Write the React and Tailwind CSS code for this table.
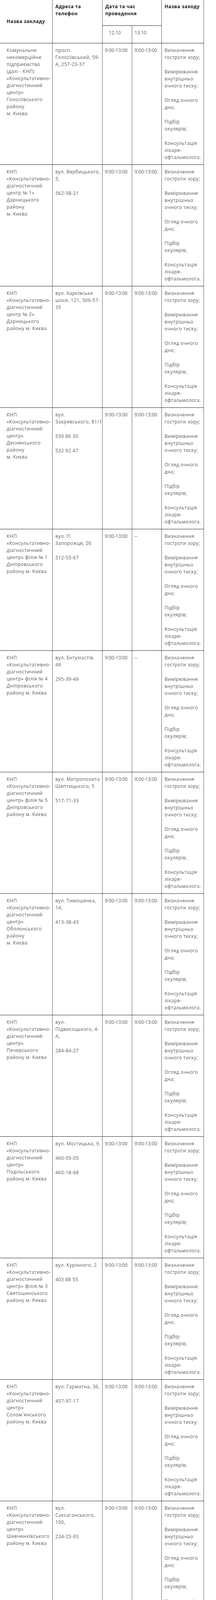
import React from "react";

const STD = [
  ["Визначення", "гостроти зору;"],
  ["Вимірювання", "внутрішньо", "очного тиску;"],
  ["Огляд очного", "дна;"],
  ["Підбір", "окулярів;"],
  ["Консультація", "лікаря-", "офтальмолога."],
];

const HOSP = [
  ["Визначення", "гостроти зору;"],
  ["Вимірювання", "внутрішньо", "очного тиску;"],
  ["Периметрія;"],
  ["Біомікроскопі", "я;"],
  ["Консультація", "лікаря-", "офтальмолога."],
];

const T = ["9:00-13:00"];
const KDC = ["КНП", "«Консультативно-", "діагностичний"];

const rows = [
  {
    name: [["Комунальне", "некомерційне", "підприємство", "(далі - КНП)", "«Консультативно-", "діагностичний", "центр»", "Голосіївського", "району", "м. Києва"]],
    addr: [["просп.", "Голосіївський, 59-", "А, 257-23-37"]],
    d1: T, d2: T, events: STD,
  },
  {
    name: [[...KDC, "центр № 1»", "Дарницького", "району", "м. Києва"]],
    addr: [["вул. Вербицького,", "5,"], ["562-58-21"]],
    d1: T, d2: T, events: STD,
  },
  {
    name: [[...KDC, "центр № 2»", "Дарницького", "району м. Києва"]],
    addr: [["вул. Харківське", "шосе, 121, 506-57-", "35"]],
    d1: T, d2: T, events: STD,
  },
  {
    name: [[...KDC, "центр»", "Деснянського", "району", "м. Києва"]],
    addr: [["вул.", "Закревського, 81/1"], ["530 86 30"], ["532 92 47"]],
    d1: T, d2: T, events: STD,
  },
  {
    name: [[...KDC, "центр» філія № 1", "Дніпровського", "району м. Києва"]],
    addr: [["вул. П.", "Запорожця, 26"], ["512-55-67"]],
    d1: T, d2: ["--"], events: STD,
  },
  {
    name: [[...KDC, "центр» філія № 4", "Дніпровського", "району м. Києва"]],
    addr: [["вул. Ентузіастів,", "49"], ["295-39-49"]],
    d1: T, d2: ["--"], events: STD,
  },
  {
    name: [[...KDC, "центр» філія № 5", "Дніпровського", "району м. Києва"]],
    addr: [["вул. Митрополита", "Шептицького, 5"], ["517-71-33"]],
    d1: T, d2: T, events: STD,
  },
  {
    name: [[...KDC, "центр»", "Оболонського", "району", "м. Києва"]],
    addr: [["вул. Тимошенка,", "14,"], ["413-38-43"]],
    d1: T, d2: T, events: STD,
  },
  {
    name: [[...KDC, "центр»", "Печерського", "району м. Києва"]],
    addr: [["вул.", "Підвисоцького, 4-", "А,"], ["284-84-27"]],
    d1: T, d2: T, events: STD,
  },
  {
    name: [[...KDC, "центр»", "Подільського", "району м. Києва"]],
    addr: [["вул. Мостицька, 9,"], ["460-05-05"], ["460-18-68"]],
    d1: T, d2: T, events: STD,
  },
  {
    name: [[...KDC, "центр» філія № 3", "Святошинського", "району м. Києва"]],
    addr: [["вул. Курінного, 2"], ["403 88 55"]],
    d1: T, d2: T, events: STD,
  },
  {
    name: [[...KDC, "центр»", "Солом`янського", "району м. Києва"]],
    addr: [["вул. Гарматна, 36,"], ["457-97-17"]],
    d1: T, d2: T, events: STD,
  },
  {
    name: [[...KDC, "центр»", "Шевченківського", "району м. Києва"]],
    addr: [["вул.", "Саксаганського,", "100,"], ["234-25-95"]],
    d1: T, d2: T, events: STD,
  },
  {
    name: [["Київська міська", "клінічна лікарня", "№ 1"], ["Офтальмологічне", "відділення"]],
    addr: [["вул. Харківське", "шосе, 121"], ["564-65-34"]],
    d1: T, d2: T, events: HOSP,
  },
  {
    name: [["Київська міська", "клінічна лікарня", "№ 3"], ["Офтальмологічне", "відділення"]],
    addr: [["вул. П.", "Запорожця, 26"], ["540-92-25"]],
    d1: T, d2: T, events: HOSP,
  },
  {
    name: [["Київська міська", "клінічна лікарня", "№ 8"], ["Офтальмологічне", "відділення"]],
    addr: [["вул. Ю.", "Кондратюка, 8", "502-37-00"]],
    d1: T, d2: T, events: HOSP,
  },
  {
    name: [["Київська міська", "клінічна лікарня", "№ 9"], ["Офтальмологічне", "відділення"]],
    addr: [[
      "вул. Ризька,",
      <>
        <span>1</span>
        <span className="ml-[42px]">440-11-44</span>
      </>,
    ]],
    d1: T, d2: T,
    events: [
      ["Визначення", "гостроти зору;"],
      ["Вимірювання", "внутрішньо", "очного тиску;"],
      ["Периметрія;"],
      ["Електротоногр", "афія;"],
      ["УЗД очей"],
      ["Консультація", "лікаря-", "офтальмолога."],
    ],
  },
  {
    name: [["Олександрівська", "клінічна лікарня", "м. Києва"], ["Поліклініка,", "кабінет № 212"]],
    addr: [["вул. Шовковична,", "39/1"], ["235-50-61"]],
    d1: T, d2: T,
    events: [
      ["Визначення", "гостроти зору;"],
      ["Авторефракто", "метрія;"],
      ["Пневмотоном", "етрія;"],
      ["Консультація", "лікаря-", "офтальмолога."],
    ],
  },
  {
    name: [
      ["Київська міська", "клінічна", "офтальмологічна", "лікарня «Центр", "мікрохірургії ока»"],
      ["Консультативно-", "діагностична", "поліклініка для", "дорослих"],
    ],
    addr: [["просп. Комарова,", "3"], ["408-29-88"]],
    d1: ["9:00-14:00"], d2: ["10:00-", "14.00"],
    events: [
      ["Визначення", "гостроти зору;"],
      ["Вимірювання", "внутрішньо", "очного тиску;"],
      ["Визначення", "поля зору;"],
      ["Авторефракто", "метрія;"],
      ["Консультація", "лікаря-", "офтальмолога."],
    ],
  },
];

// each paragraph is a list of lines, broken where the original breaks them
const Paras = ({ paras }) => (
  <div className="flex flex-col gap-[19px]">
    {paras.map((lines, i) => (
      <div key={i} className="flex flex-col">
        {lines.map((line, j) => (
          <div key={j} className="h-[18px] leading-[18px] whitespace-nowrap">
            {line}
          </div>
        ))}
      </div>
    ))}
  </div>
);

const cell = "border-r border-[#555] pt-[9px] pb-[9px]";

const App = () => {
  return (
    <div className="w-[554px] bg-white font-['Open_Sans',sans-serif] text-[12px] leading-[18px] tracking-[0.5px] text-[#5e5e5e]">
      <div className="w-[523px]">
        {/* header */}
        <div className="grid grid-cols-[135px_128px_152px_108px] border-b border-[#222] font-bold text-[#222]">
          <div className="flex items-center border-r border-[#555] pl-[17px]">Назва закладу</div>
          <div className="border-r border-[#555] pl-[7px] pt-[8px]">
            <div className="h-[18px]">Адреса та</div>
            <div className="h-[18px]">телефон</div>
          </div>
          <div className="flex flex-col border-r border-[#555]">
            <div className="h-[66px] border-b border-[#222] pl-[7px] pt-[8px]">
              <div className="h-[18px]">Дата та час</div>
              <div className="h-[18px]">проведення</div>
            </div>
            <div className="grid h-[44px] grid-cols-[76px_76px] font-normal tracking-normal text-[#5e5e5e]">
              <div className="border-r border-[#555] pl-[16px] pt-[9px]">12.10</div>
              <div className="pl-[6px] pt-[9px]">13.10</div>
            </div>
          </div>
          <div className="border-r border-[#555] pl-[7px] pt-[8px]">Назва заходу</div>
        </div>

        {rows.map((row, i) => (
          <div key={i} className="grid grid-cols-[135px_128px_76px_76px_108px] border-b border-[#222]">
            <div className={`${cell} pl-[17px]`}>
              <Paras paras={row.name} />
            </div>
            <div className={`${cell} pl-[7px]`}>
              <Paras paras={row.addr} />
            </div>
            <div className={`${cell} pl-[6px] tracking-normal`}>
              <Paras paras={[row.d1]} />
            </div>
            <div className={`${cell} pl-[6px] tracking-normal`}>
              <Paras paras={[row.d2]} />
            </div>
            <div className={`${cell} pl-[7px]`}>
              <Paras paras={row.events} />
            </div>
          </div>
        ))}
      </div>
    </div>
  );
};

export default App;
